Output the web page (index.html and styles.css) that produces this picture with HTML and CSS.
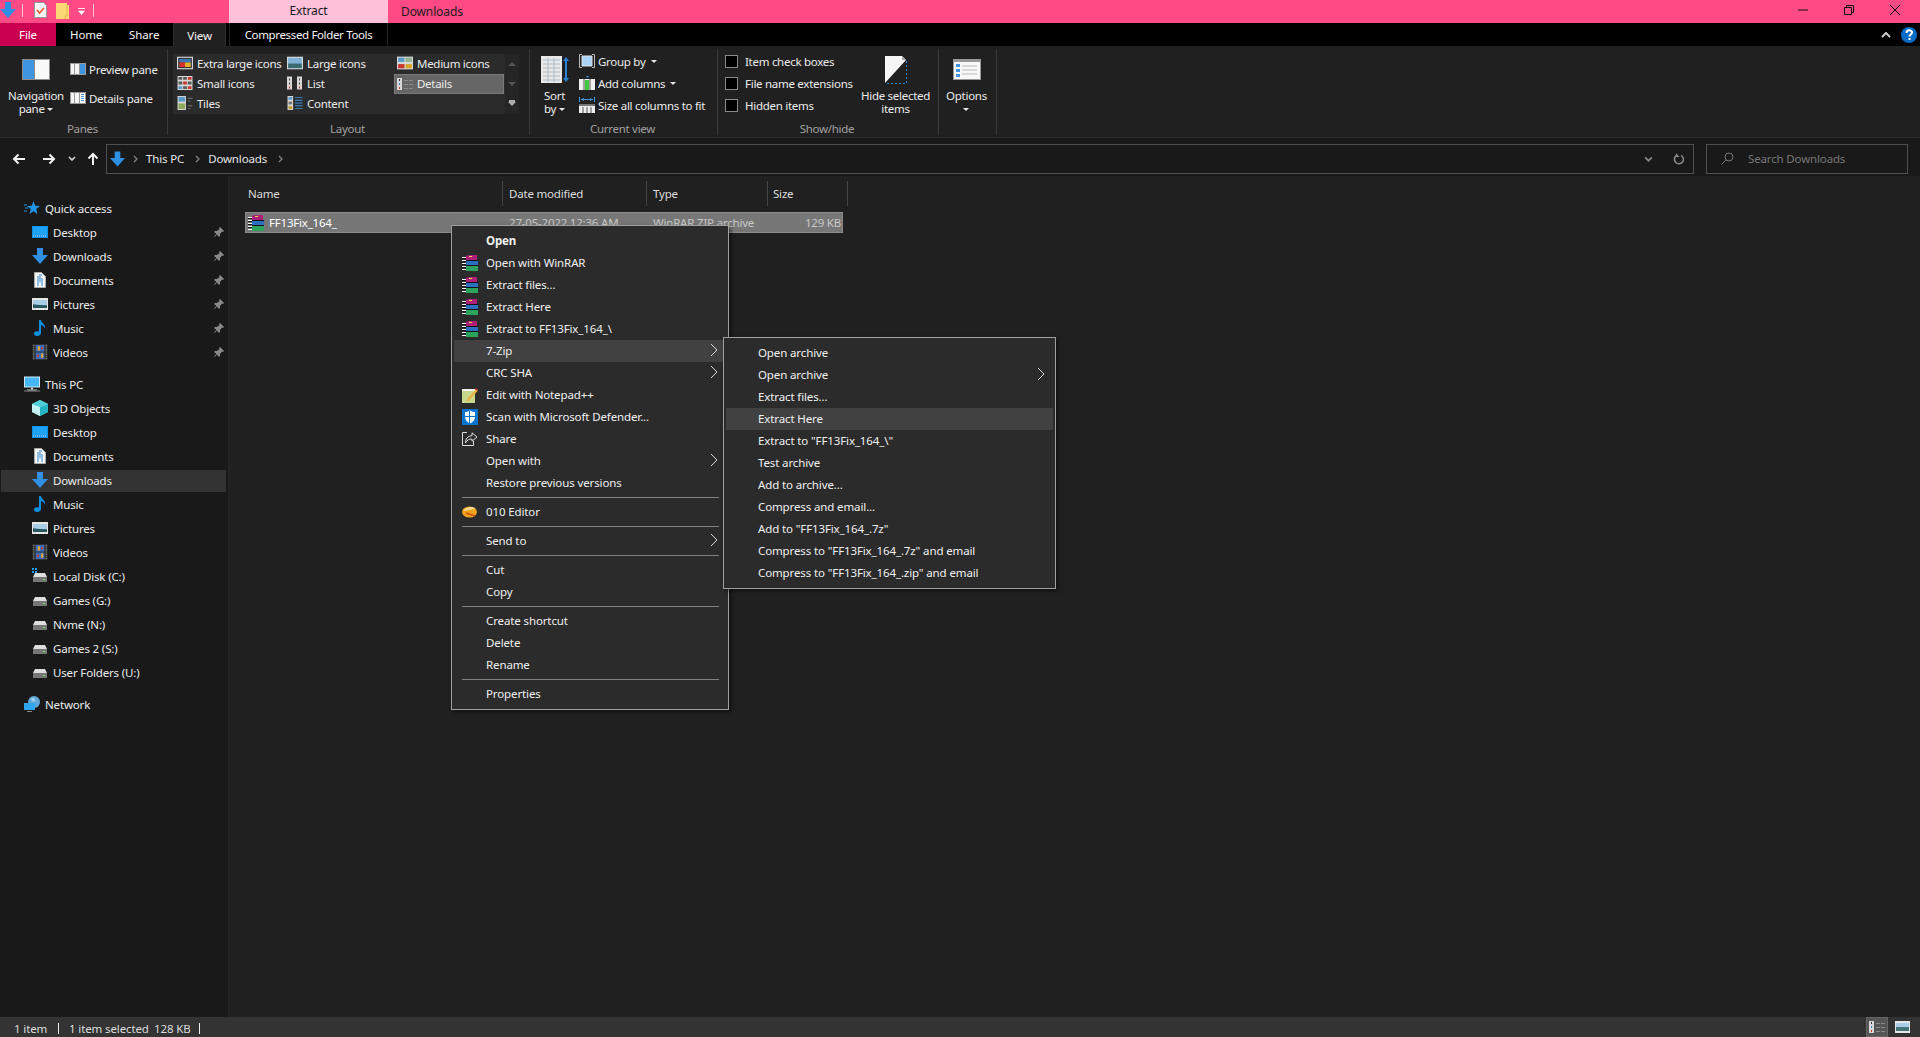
FILE: index.html
```html
<!DOCTYPE html>
<html lang="en">
<head>
<meta charset="utf-8">
<title>Downloads</title>
<link rel="stylesheet" href="styles.css">
</head>
<body>
<svg class="defs" xmlns="http://www.w3.org/2000/svg">
  <symbol id="dl" viewBox="0 0 16 16"><path d="M5 0h6v7h5l-8 9-8-9h5z" fill="#2f8fe3"/></symbol>
  <symbol id="qnote" viewBox="0 0 13 16"><path d="M.5.5h9l3 3v12H.5z" fill="#f5f5f5" stroke="#999"/><path d="M3 8l2.500 3 4.500-5" fill="none" stroke="#e8562a" stroke-width="1.500"/></symbol>
  <symbol id="qfolder" viewBox="0 0 13 16"><path d="M0 0h11v2h2v14H0z" fill="#fbd775"/><path d="M11 2v11H9v3" fill="none" stroke="#e2b64b"/></symbol>
  <symbol id="qdrop" viewBox="0 0 8 8"><path d="M0 .5h8" stroke="#fff"/><path d="M0 3h8L4 8z" fill="#fff"/></symbol>
  <symbol id="navpane" viewBox="0 0 28 21"><path d="M0 0h28v21H0z" fill="#8c8c8c"/><path d="M1 1h11v19H1z" fill="#3f95e0"/><path d="M13 1h14v19H13z" fill="#f8f8f8"/></symbol>
  <symbol id="prevpane" viewBox="0 0 16 12"><path d="M0 0h16v12H0z" fill="#999"/><path d="M1 1h3v10H1zM5 1h4v10H5z" fill="#f4f4f4"/><path d="M10 1h5v10h-5z" fill="#3f95e0"/></symbol>
  <symbol id="detpane" viewBox="0 0 16 12"><path d="M0 0h16v12H0z" fill="#999"/><path d="M1 1h3v10H1zM5 1h4v10H5z" fill="#f4f4f4"/><path d="M10 1h5v10h-5z" fill="#fff"/><path d="M11 2h3v1h-3zM11 4h3v1h-3zM11 6h3v1h-3zM11 8h3v1h-3z" fill="#3f95e0"/></symbol>
  <symbol id="xl" viewBox="0 0 14 11"><path d="M0 0h14v11H0z" fill="#d8d8d8"/><path d="M1 1h12v9H1z" fill="#333"/><path d="M2 2h10v3H2z" fill="#3a78b8"/><path d="M2 5h5v4H2z" fill="#d8352a"/><path d="M7 5h5v4H7z" fill="#e2b32c"/></symbol>
  <symbol id="lg" viewBox="0 0 14 11"><path d="M0 0h14v11H0z" fill="#d8d8d8"/><path d="M1 1h12v9H1z" fill="#7fb2d6"/><path d="M1 6h12v4H1z" fill="#3a6a70"/></symbol>
  <symbol id="med" viewBox="0 0 15 12"><path d="M0 0h15v12H0z" fill="#d8d8d8"/><path d="M1 1h6v4H1z" fill="#5a9acb"/><path d="M8 1h6v4H8z" fill="#8fb48a"/><path d="M1 7h6v4H1z" fill="#c8382c"/><path d="M8 7h6v4H8z" fill="#d8a52c"/></symbol>
  <symbol id="sm" viewBox="0 0 16 15"><path d="M0 0h16v15H0z" fill="#d8d8d8"/><path d="M1 1h4v3H1zM6 1h4v3H6zM1 6h4v3H1zM11 6h4v3h-4zM6 11h4v3H6z" fill="#5a5a5a"/><path d="M11 1h4v3h-4zM6 6h4v3H6zM11 11h4v3h-4z" fill="#c8382c"/><path d="M1 11h4v3H1z" fill="#5a9acb"/></symbol>
  <symbol id="lst" viewBox="0 0 16 13"><path d="M0 0h5v13H0zM10 0h5v13h-5z" fill="#d8d8d8"/><path d="M2 2h1v2H2zM2 6h1v2H2zM12 2h1v2h-1zM12 6h1v2h-1z" fill="#444"/><path d="M2 10h1v2H2zM12 10h1v2h-1z" fill="#c8382c"/></symbol>
  <symbol id="tile" viewBox="0 0 16 15"><path d="M0 0h9v15H0z" fill="#d8d8d8"/><path d="M1 1h7v5H1z" fill="#5a9acb"/><path d="M1 8h7v6H1z" fill="#8fa85a"/><path d="M11 2h5v1h-5zM11 5h3v1h-3zM11 10h5v1h-5zM11 13h3v1h-3z" fill="#777"/></symbol>
  <symbol id="cont" viewBox="0 0 16 15"><path d="M0 0h6v15H0z" fill="#d8d8d8"/><path d="M1 1h4v3H1z" fill="#5a9acb"/><path d="M1 6h4v3H1z" fill="#777"/><path d="M1 11h4v3H1z" fill="#c89a2c"/><path d="M8 1h8v1H8zM8 4h8v1H8zM8 7h8v1H8zM8 10h8v1H8zM8 13h8v1H8z" fill="#3f95e0"/></symbol>
  <symbol id="detv" viewBox="0 0 16 12"><path d="M0 0h5v12H0z" fill="#d8d8d8"/><path d="M2 1h1v2H2z" fill="#333"/><path d="M2 5h1v2H2z" fill="#3f7fc8"/><path d="M2 9h1v2H2z" fill="#c8382c"/><path d="M7 2h4v1H7zM12 2h4v1h-4zM7 6h4v1H7zM12 6h4v1h-4zM7 10h4v1H7zM12 10h4v1h-4z" fill="#8a8a8a"/></symbol>
  <symbol id="sort" viewBox="0 0 28 27"><path d="M0 0h21v27H0z" fill="#e8e8e8"/><path d="M2 4h17M2 8h17M2 12h17M2 16h17M2 20h17M2 24h17M7 2v24M13 2v24" stroke="#aebcc8"/><path d="M25 3v21" stroke="#2b83d6" stroke-width="2"/><path d="M22 5l3-4 3 4zM22 22l3 4 3-4z" fill="#2b83d6"/></symbol>
  <symbol id="grp" viewBox="0 0 16 14"><path d="M3 .5H.5v13H3M13 .5h2.500v13H13" fill="none" stroke="#bbb"/><path d="M3 2h10v10H3z" fill="#a8d4f8" stroke="#e0e0e0"/></symbol>
  <symbol id="addc" viewBox="0 0 16 14"><path d="M7 0h3L8.500 2z" fill="#3f95e0"/><path d="M0 3h16v11H0z" fill="#f0f0f0"/><path d="M6 4h4v10H6z" fill="#3ecb3e"/><path d="M5 3v11M11 3v11" stroke="#555"/></symbol>
  <symbol id="sizec" viewBox="0 0 16 16"><path d="M.5 0v5M15.500 0v5M2 2.500h12" stroke="#3f95e0"/><path d="M5 1v3L2 2.500zM11 1v3l3-1.500z" fill="#3f95e0"/><path d="M0 7h16v9H0z" fill="#eee"/><path d="M0 7h16v2H0z" fill="#777"/><path d="M4 10v6M8 10v6M12 10v6" stroke="#555"/></symbol>
  <symbol id="hide" viewBox="0 0 22 28"><path d="M0 0h17l4 4L0 27z" fill="#f6f6f6"/><path d="M17 0v4h4z" fill="#aaa"/><path d="M21.500 5v22.500H1" fill="none" stroke="#2b83d6" stroke-dasharray="2 2"/></symbol>
  <symbol id="opts" viewBox="0 0 28 21"><path d="M0 0h28v21H0z" fill="#999"/><path d="M1 3h26v17H1z" fill="#f8f8f8"/><path d="M9 7h15M9 11h15M9 15h15" stroke="#bbb"/><path d="M3 5h4v3H3zM3 10h4v3H3zM3 15h4v3H3z" fill="#3f95e0"/></symbol>
  <symbol id="desk" viewBox="0 0 16 12"><path d="M0 0h16v12H0z" fill="#0a92ec"/><path d="M1 1h14v8H1z" fill="#1fa2f5"/><path d="M1 10h14" stroke="#d8ecfa" stroke-dasharray="1 1"/></symbol>
  <symbol id="doc" viewBox="0 0 12 16"><path d="M.5.500h7l4 4v11H.5z" fill="#f4f4f4" stroke="#aaa"/><path d="M3 5h4M5 3h3M3 7h6M3 9h6M3 11h2M7 11h2M3 13h2M7 13h2" stroke="#2b83d6"/></symbol>
  <symbol id="pic" viewBox="0 0 16 12"><path d="M0 0h16v12H0z" fill="#e6e6e6"/><path d="M1 2h14v8H1z" fill="#a9cde6"/><path d="M1 6l6 1 8 0v3H1z" fill="#41757a"/><path d="M1 7h8l6 1v2H1z" fill="#2a5660"/></symbol>
  <symbol id="mus" viewBox="0 0 12 16"><path d="M5 0h2c0 3 5 4 4 9-.5-2-2-3.500-4-4v8c0 2-2 3-4 3s-3-1-3-2.500S2 11 5 11.500z" fill="#0f8fe0"/></symbol>
  <symbol id="vid" viewBox="0 0 14 15"><path d="M0 0h14v15H0z" fill="#333"/><path d="M3 1h8v6H3z" fill="#3f6fc0"/><path d="M3 8h8v6H3z" fill="#3f6fc0"/><path d="M5 2h2v4H5zM8 9h2v4H8z" fill="#e0a82c"/><path d="M8 3h2v2H8zM4 10h2v2H4z" fill="#c8382c"/><path d="M1 1v13M13 1v13" stroke="#888" stroke-dasharray="1 1"/></symbol>
  <symbol id="star" viewBox="0 0 16 14"><path d="M9.500 0l1.700 4.700L16 5l-3.800 3 1.300 5-4-2.800-4 2.800 1.300-5L3 5l4.800-.3z" fill="#1f95ea"/><path d="M0 4h3M1 7h3M0 10h3" stroke="#1f95ea"/></symbol>
  <symbol id="pc" viewBox="0 0 16 15"><path d="M0 0h16v11H0z" fill="#cfe8f8"/><path d="M1 1h14v9H1z" fill="#47b7f2"/><path d="M7 11h2v2H7z" fill="#ccc"/><path d="M3 13h10v1H3z" fill="#ccc"/><path d="M0 14h16v1H0z" fill="#888"/></symbol>
  <symbol id="cube" viewBox="0 0 16 16"><path d="M8 0l8 4v8l-8 4-8-4V4z" fill="#7ee0e0"/><path d="M8 7l8-3v8l-8 4z" fill="#25b2c2"/><path d="M8 7L0 4v8l8 4z" fill="#c4f2f2"/><path d="M8 0l8 4-8 3-8-3z" fill="#4fcfd8"/></symbol>
  <symbol id="disk" viewBox="0 0 16 16"><path d="M3 5h10l2 4v5H1V9z" fill="#ddd"/><path d="M1 9h14v5H1z" fill="#777"/><path d="M11 11h2v1h-2z" fill="#6fe06f"/></symbol>
  <symbol id="cdisk" viewBox="0 0 16 16"><path d="M0 0h2v2H0zM3 0h2v2H3zM0 3h2v2H0zM3 3h2v2H3z" fill="#1fa2f5"/><path d="M3 5h10l2 4v5H1V9z" fill="#ddd"/><path d="M1 9h14v5H1z" fill="#777"/><path d="M11 11h2v1h-2z" fill="#6fe06f"/></symbol>
  <symbol id="net" viewBox="0 0 16 16"><circle cx="10" cy="6" r="6" fill="#5ea8d8"/><path d="M7 2c3-1 5 1 4 3S7 6 7 2z" fill="#9ad0ec"/><path d="M0 7h11v7H0z" fill="#2ea6ee"/><path d="M3 15h5v1H3z" fill="#888"/></symbol>
  <symbol id="pin" viewBox="0 0 10 10"><path d="M6 0l4 4-1 1-1-.5L6 7v2L5 10 3 7.500.5 10 0 9.500 2.500 7 0 5l1-1h2l2.500-2L5 1z" fill="#8a8a8a"/></symbol>
  <symbol id="rar" viewBox="0 0 16 16"><path d="M4 1l3-1h8v5H4z" fill="#b01e78"/><path d="M4 6h12v4H4z" fill="#2c6fc0"/><path d="M4 11h12v5H4z" fill="#2ca25a"/><path d="M0 2h4v1H0zM0 5h4v1H0zM0 8h4v1H0zM0 11h4v1H0zM0 14h4v1H0z" fill="#fff"/><path d="M0 3.500h4M0 6.500h4M0 9.500h4M0 12.500h4M4 5.500h12M4 10.500h12" stroke="#111"/><path d="M7 1h3v1H7z" fill="#e8d44a"/></symbol>
  <symbol id="npp" viewBox="0 0 16 16"><path d="M0 2h13v14H0z" fill="#c6d98c"/><path d="M0 2h13v2H0z" fill="#f4f4f4"/><path d="M5 12L14 2l2 1.500-9 10-3 1z" fill="#e8b44a"/><path d="M14 1l2 2-1 1-2-2z" fill="#d03a2a"/></symbol>
  <symbol id="def" viewBox="0 0 16 16"><path d="M0 0h16v16H0z" fill="#0a74d0"/><path d="M8 1.500c2 1.200 3.500 1.500 5 1.500v5c0 3-2 5-5 6.500C5 13 3 11 3 8V3c1.500 0 3-.3 5-1.500z" fill="#fff"/><path d="M7.500 2v13M3 7.500h10" stroke="#0a74d0"/></symbol>
  <symbol id="share" viewBox="0 0 16 14"><path d="M5 .5H.5v13h11V9" fill="none" stroke="#ddd"/><path d="M10 .8l5 4.200-5 4.200V7C7 7 5 8 3.500 11c0-4 2-7 6.500-7.300z" fill="none" stroke="#ddd"/></symbol>
  <symbol id="leaf" viewBox="0 0 16 12"><ellipse cx="7.500" cy="6" rx="7.500" ry="5.500" fill="#f2a31e"/><path d="M1 5c3-4 8-5 12-3 1 1-5 2-12 3z" fill="#f8d88a"/><path d="M4 7l9 3" stroke="#c8501e" stroke-width="1.500"/></symbol>
  <symbol id="help" viewBox="0 0 16 16"><circle cx="8" cy="8" r="8" fill="#0a6cc4"/><path d="M5.500 6c0-3.500 5.500-3.500 5.500-.5 0 2-2.500 2-2.500 4" fill="none" stroke="#fff" stroke-width="2"/><path d="M7.500 11h2v2h-2z" fill="#fff"/></symbol>
  <symbol id="arrow" viewBox="0 0 8 14"><path d="M1 1l6 6-6 6" fill="none" stroke="#d8d8d8"/></symbol>
  <symbol id="crumb" viewBox="0 0 5 8"><path d="M1 1l3 3-3 3" fill="none" stroke="#888" stroke-width="1.200"/></symbol>
  <symbol id="navl" viewBox="0 0 14 12"><path d="M13 6H2M6.500 1.500L2 6l4.500 4.500" fill="none" stroke="#f2f2f2" stroke-width="2"/></symbol>
  <symbol id="navr" viewBox="0 0 14 12"><path d="M1 6h11M7.500 1.500L12 6l-4.500 4.500" fill="none" stroke="#f2f2f2" stroke-width="2"/></symbol>
  <symbol id="navu" viewBox="0 0 12 14"><path d="M6 13V2M1.500 6.500L6 2l4.500 4.500" fill="none" stroke="#f2f2f2" stroke-width="2"/></symbol>
  <symbol id="chev" viewBox="0 0 8 5"><path d="M1 1l3 3 3-3" fill="none" stroke="currentColor" stroke-width="1.500"/></symbol>
  <symbol id="refresh" viewBox="0 0 12 12"><path d="M8 2.300A4.500 4.500 0 1 1 3.500 2.500" fill="none" stroke="#8a8a8a" stroke-width="1.500"/><path d="M3 0v4h3.500z" fill="#8a8a8a"/></symbol>
  <symbol id="search" viewBox="0 0 13 13"><circle cx="8" cy="5" r="4" fill="none" stroke="#777"/><path d="M5 8l-4.500 4.500" stroke="#777"/></symbol>
  <symbol id="tiles" viewBox="0 0 15 12"><path d="M0 0h15v12H0z" fill="#e6e6e6"/><path d="M1 2h13v8H1z" fill="#a9cde6"/><path d="M1 6h13v4H1z" fill="#41757a"/></symbol>
</svg>

<div class="window">
  <header class="titlebar">
    <svg class="ic qat-dl"><use href="#dl"/></svg>
    <span class="qat-sep"></span>
    <svg class="ic qat-note"><use href="#qnote"/></svg>
    <svg class="ic qat-folder"><use href="#qfolder"/></svg>
    <svg class="ic qat-drop"><use href="#qdrop"/></svg>
    <span class="qat-sep qat-sep-end"></span>
    <span class="ctx-title">Extract</span>
    <span class="win-title">Downloads</span>
    <div class="win-ctrls">
      <span class="wc"><svg class="wc-ic" viewBox="0 0 10 10"><path d="M0 5h10" stroke="#111"/></svg></span>
      <span class="wc"><svg class="wc-ic" viewBox="0 0 10 10"><path d="M.5 2.500h7v7h-7zM2.500 2.500v-2h7v7h-2" fill="none" stroke="#111"/></svg></span>
      <span class="wc"><svg class="wc-ic" viewBox="0 0 10 10"><path d="M0 0l10 10M10 0L0 10" stroke="#111" fill="none"/></svg></span>
    </div>
  </header>

  <nav class="tabs">
    <span class="tab tab-file">File</span>
    <span class="tab tab-home">Home</span>
    <span class="tab tab-share">Share</span>
    <span class="tab tab-view">View</span>
    <span class="tab tab-tools">Compressed Folder Tools</span>
    <div class="tabs-right">
      <svg class="collapse" viewBox="0 0 10 6"><path d="M1 5l4-4 4 4" fill="none" stroke="#ccc" stroke-width="2"/></svg>
      <svg class="ic help"><use href="#help"/></svg>
    </div>
  </nav>

  <section class="ribbon">
    <div class="group g-panes">
      <div class="group-body">
        <div class="large large-nav">
          <svg class="ic lg-icon"><use href="#navpane"/></svg>
          <span class="large-label">Navigation<br>pane <i class="caret"></i></span>
        </div>
        <div class="pane-col">
          <div class="pane-row"><svg class="ic i16x12"><use href="#prevpane"/></svg>Preview pane</div>
          <div class="pane-row"><svg class="ic i16x12"><use href="#detpane"/></svg>Details pane</div>
        </div>
      </div>
      <div class="group-label">Panes</div>
    </div>

    <div class="group g-layout">
      <div class="group-body">
        <div class="gallery">
          <div class="gallery-grid">
            <div class="gi"><svg class="ic gi-ic"><use href="#xl"/></svg>Extra large icons</div>
            <div class="gi"><svg class="ic gi-ic"><use href="#lg"/></svg>Large icons</div>
            <div class="gi"><svg class="ic gi-ic"><use href="#med"/></svg>Medium icons</div>
            <div class="gi"><svg class="ic gi-ic"><use href="#sm"/></svg>Small icons</div>
            <div class="gi"><svg class="ic gi-ic"><use href="#lst"/></svg>List</div>
            <div class="gi gi-sel"><svg class="ic gi-ic"><use href="#detv"/></svg>Details</div>
            <div class="gi"><svg class="ic gi-ic"><use href="#tile"/></svg>Tiles</div>
            <div class="gi"><svg class="ic gi-ic"><use href="#cont"/></svg>Content</div>
          </div>
          <div class="gallery-scroll">
            <i class="gs gs-up"></i>
            <i class="gs gs-down"></i>
            <i class="gs gs-more"></i>
          </div>
        </div>
      </div>
      <div class="group-label">Layout</div>
    </div>

    <div class="group g-current">
      <div class="group-body">
        <div class="large large-sort">
          <svg class="ic sort-icon"><use href="#sort"/></svg>
          <span class="large-label">Sort<br>by <i class="caret"></i></span>
        </div>
        <div class="small-col">
          <div class="small-row"><svg class="ic i16"><use href="#grp"/></svg>Group by <i class="caret"></i></div>
          <div class="small-row"><svg class="ic i16"><use href="#addc"/></svg>Add columns <i class="caret"></i></div>
          <div class="small-row"><svg class="ic i16"><use href="#sizec"/></svg>Size all columns to fit</div>
        </div>
      </div>
      <div class="group-label">Current view</div>
    </div>

    <div class="group g-show">
      <div class="group-body">
        <div class="small-col check-col">
          <div class="small-row"><i class="check"></i>Item check boxes</div>
          <div class="small-row"><i class="check"></i>File name extensions</div>
          <div class="small-row"><i class="check"></i>Hidden items</div>
        </div>
        <div class="large large-hide">
          <svg class="ic hide-icon"><use href="#hide"/></svg>
          <span class="large-label">Hide selected<br>items</span>
        </div>
      </div>
      <div class="group-label">Show/hide</div>
    </div>

    <div class="group g-options">
      <div class="group-body">
        <div class="large large-opts">
          <svg class="ic lg-icon"><use href="#opts"/></svg>
          <span class="large-label">Options<br><i class="caret"></i></span>
        </div>
      </div>
    </div>
  </section>

  <section class="addressbar">
    <svg class="ic nav-back"><use href="#navl"/></svg>
    <svg class="ic nav-fwd"><use href="#navr"/></svg>
    <svg class="ic nav-recent"><use href="#chev"/></svg>
    <svg class="ic nav-up"><use href="#navu"/></svg>
    <div class="addr-box">
      <svg class="ic addr-dl"><use href="#dl"/></svg>
      <svg class="ic crumb"><use href="#crumb"/></svg>
      <span class="crumb-text">This PC</span>
      <svg class="ic crumb"><use href="#crumb"/></svg>
      <span class="crumb-text">Downloads</span>
      <svg class="ic crumb"><use href="#crumb"/></svg>
      <svg class="ic addr-chev"><use href="#chev"/></svg>
      <svg class="ic addr-refresh"><use href="#refresh"/></svg>
    </div>
    <div class="search-box">
      <svg class="ic search-ic"><use href="#search"/></svg>
      <span>Search Downloads</span>
    </div>
  </section>

  <div class="content">
    <aside class="sidebar">
      <div class="side-head"><svg class="ic i16"><use href="#star"/></svg>Quick access</div>
      <div class="side-item"><svg class="ic i16"><use href="#desk"/></svg>Desktop<svg class="ic pin"><use href="#pin"/></svg></div>
      <div class="side-item"><svg class="ic i16"><use href="#dl"/></svg>Downloads<svg class="ic pin"><use href="#pin"/></svg></div>
      <div class="side-item"><svg class="ic i16"><use href="#doc"/></svg>Documents<svg class="ic pin"><use href="#pin"/></svg></div>
      <div class="side-item"><svg class="ic i16"><use href="#pic"/></svg>Pictures<svg class="ic pin"><use href="#pin"/></svg></div>
      <div class="side-item"><svg class="ic i16"><use href="#mus"/></svg>Music<svg class="ic pin"><use href="#pin"/></svg></div>
      <div class="side-item"><svg class="ic i16"><use href="#vid"/></svg>Videos<svg class="ic pin"><use href="#pin"/></svg></div>
      <div class="side-head side-gap"><svg class="ic i16"><use href="#pc"/></svg>This PC</div>
      <div class="side-item"><svg class="ic i16"><use href="#cube"/></svg>3D Objects</div>
      <div class="side-item"><svg class="ic i16"><use href="#desk"/></svg>Desktop</div>
      <div class="side-item"><svg class="ic i16"><use href="#doc"/></svg>Documents</div>
      <div class="side-item side-sel"><svg class="ic i16"><use href="#dl"/></svg>Downloads</div>
      <div class="side-item"><svg class="ic i16"><use href="#mus"/></svg>Music</div>
      <div class="side-item"><svg class="ic i16"><use href="#pic"/></svg>Pictures</div>
      <div class="side-item"><svg class="ic i16"><use href="#vid"/></svg>Videos</div>
      <div class="side-item"><svg class="ic i16"><use href="#cdisk"/></svg>Local Disk (C:)</div>
      <div class="side-item"><svg class="ic i16"><use href="#disk"/></svg>Games (G:)</div>
      <div class="side-item"><svg class="ic i16"><use href="#disk"/></svg>Nvme (N:)</div>
      <div class="side-item"><svg class="ic i16"><use href="#disk"/></svg>Games 2 (S:)</div>
      <div class="side-item"><svg class="ic i16"><use href="#disk"/></svg>User Folders (U:)</div>
      <div class="side-head side-gap"><svg class="ic i16"><use href="#net"/></svg>Network</div>
    </aside>

    <main class="files">
      <div class="col-head">
        <span class="ch ch-name">Name</span>
        <span class="ch ch-date">Date modified</span>
        <span class="ch ch-type">Type</span>
        <span class="ch ch-size">Size</span>
      </div>
      <div class="file-row">
        <span class="fc fc-name"><svg class="ic i16 file-ic"><use href="#rar"/></svg>FF13Fix_164_</span>
        <span class="fc fc-date">27-05-2022 12:36 AM</span>
        <span class="fc fc-type">WinRAR ZIP archive</span>
        <span class="fc fc-size">129 KB</span>
      </div>
    </main>
  </div>

  <footer class="statusbar">
    <span class="st-count">1 item</span>
    <span class="st-bar"></span>
    <span class="st-sel">1 item selected</span>
    <span class="st-size">128 KB</span>
    <span class="st-bar"></span>
    <div class="st-views">
      <span class="st-view st-view-on"><svg class="ic st-ic-a"><use href="#detv"/></svg></span>
      <span class="st-view"><svg class="ic st-ic-b"><use href="#tiles"/></svg></span>
    </div>
  </footer>

  <div class="menu menu-main">
    <div class="mi mi-bold">Open</div>
    <div class="mi"><svg class="ic mi-ic"><use href="#rar"/></svg>Open with WinRAR</div>
    <div class="mi"><svg class="ic mi-ic"><use href="#rar"/></svg>Extract files...</div>
    <div class="mi"><svg class="ic mi-ic"><use href="#rar"/></svg>Extract Here</div>
    <div class="mi"><svg class="ic mi-ic"><use href="#rar"/></svg>Extract to FF13Fix_164_\</div>
    <div class="mi mi-hover">7-Zip<svg class="ic mi-arrow"><use href="#arrow"/></svg></div>
    <div class="mi">CRC SHA<svg class="ic mi-arrow"><use href="#arrow"/></svg></div>
    <div class="mi"><svg class="ic mi-ic"><use href="#npp"/></svg>Edit with Notepad++</div>
    <div class="mi"><svg class="ic mi-ic"><use href="#def"/></svg>Scan with Microsoft Defender...</div>
    <div class="mi"><svg class="ic mi-ic"><use href="#share"/></svg>Share</div>
    <div class="mi">Open with<svg class="ic mi-arrow"><use href="#arrow"/></svg></div>
    <div class="mi">Restore previous versions</div>
    <div class="msep"></div>
    <div class="mi"><svg class="ic mi-ic"><use href="#leaf"/></svg>010 Editor</div>
    <div class="msep"></div>
    <div class="mi">Send to<svg class="ic mi-arrow"><use href="#arrow"/></svg></div>
    <div class="msep"></div>
    <div class="mi">Cut</div>
    <div class="mi">Copy</div>
    <div class="msep"></div>
    <div class="mi">Create shortcut</div>
    <div class="mi">Delete</div>
    <div class="mi">Rename</div>
    <div class="msep"></div>
    <div class="mi">Properties</div>
  </div>

  <div class="menu menu-sub">
    <div class="mi">Open archive</div>
    <div class="mi">Open archive<svg class="ic mi-arrow"><use href="#arrow"/></svg></div>
    <div class="mi">Extract files...</div>
    <div class="mi mi-hover">Extract Here</div>
    <div class="mi">Extract to "FF13Fix_164_\"</div>
    <div class="mi">Test archive</div>
    <div class="mi">Add to archive...</div>
    <div class="mi">Compress and email...</div>
    <div class="mi">Add to "FF13Fix_164_.7z"</div>
    <div class="mi">Compress to "FF13Fix_164_.7z" and email</div>
    <div class="mi">Compress to "FF13Fix_164_.zip" and email</div>
  </div>
</div>
</body>
</html>
```

FILE: styles.css
```css
* { box-sizing: border-box; }
html, body { margin: 0; padding: 0; }
body { background: #202020; font-family: "Noto Sans", "Open Sans", sans-serif; font-size: 11.5px; letter-spacing: -0.12px; color: #ececec; }
.defs { display: none; }
.ic { display: block; flex: none; }
.window { position: relative; width: 1920px; height: 1037px; overflow: hidden; display: flex; flex-direction: column; }

/* title bar */
.titlebar { height: 23px; background: #ff4b85; display: flex; align-items: center; flex: none; color: #1a1a1a; font-size: 12px; }
.qat-dl { width: 16px; height: 16px; margin-left: 0; margin-top: -3px; }
.qat-sep { width: 1px; height: 13px; background: #ffc0d9; margin-left: 6px; margin-top: -2px; }
.qat-note { width: 13px; height: 16px; margin-left: 11px; margin-top: -3px; }
.qat-folder { width: 13px; height: 16px; margin-left: 9px; margin-top: -1px; }
.qat-drop { width: 7px; height: 7px; margin-left: 9px; }
.qat-sep-end { margin-left: 8px; margin-right: 135px; }
.ctx-title { width: 159px; height: 23px; background: #ffc0d9; text-align: center; line-height: 21px; flex: none; margin-left: 0; }
.win-title { margin-left: 13px; line-height: 23px; }
.win-ctrls { margin-left: auto; margin-right: 2px; display: flex; align-self: flex-start; }
.wc { width: 46px; height: 19px; display: flex; align-items: center; justify-content: center; }
.wc-ic { width: 10px; height: 10px; display: block; }

/* tabs */
.tabs { height: 23px; background: #000; display: flex; align-items: stretch; flex: none; position: relative; }
.tab { line-height: 23px; color: #f4f4f4; white-space: nowrap; }
.tab-file { width: 56px; background: #c8004f; text-align: center; color: #fff; }
.tab-home { margin-left: 14px; width: 59px; }
.tab-share { width: 44px; }
.tab-view { width: 53px; background: #202020; text-align: center; border: 1px solid #2e2e2e; border-bottom: 0; }
.tab-tools { margin-left: 3px; width: 159px; text-align: center; letter-spacing: -0.35px; border-left: 1px solid #232323; border-right: 1px solid #232323; }
.tabs-right { margin-left: auto; display: flex; align-items: center; margin-right: 3px; }
.collapse { width: 10px; height: 6px; display: block; margin-right: 10px; }
.help { width: 16px; height: 16px; }

/* ribbon */
.ribbon { height: 92px; background: #202020; display: flex; padding-top: 3px; flex: none; border-bottom: 1px solid #2b2b2b; letter-spacing: -0.28px; }
.group { height: 86px; border-right: 1px solid #3a3a3a; display: flex; flex-direction: column; flex: none; }
.group-body { height: 74px; display: flex; }
.group-label { height: 12px; line-height: 12px; text-align: center; color: #a0a0a0; font-size: 11.5px; padding-right: 2px; }
.g-panes { width: 168px; }
.g-layout { width: 362px; }
.g-current { width: 188px; }
.g-show { width: 221px; }
.g-options { width: 58px; }
.large { display: flex; flex-direction: column; align-items: center; flex: none; padding-top: 10px; }
.large-label { display: block; text-align: center; line-height: 13px; margin-top: 9px; white-space: nowrap; }
.large-nav { width: 72px; }
.lg-icon { width: 28px; height: 21px; }
.caret { display: inline-block; width: 0; height: 0; border: 3px solid transparent; border-top: 3px solid #e6e6e6; border-bottom: 0; vertical-align: 2px; }
.pane-col { margin-left: -2px; display: flex; flex-direction: column; padding-top: 14px; gap: 17px; }
.pane-row { display: flex; align-items: center; gap: 3px; height: 12px; white-space: nowrap; }
.i16x12 { width: 16px; height: 12px; }
.gallery { margin: 5px 0 0 5px; width: 346px; height: 60px; background: #2b2b2b; display: flex; }
.gallery-grid { width: 331px; margin-left: 1px; display: grid; grid-template-columns: repeat(3, 110px); grid-auto-rows: 20px; }
.gi { display: flex; align-items: center; white-space: nowrap; padding: 0 0 2px 3px; }
.gi-ic { width: 16px; height: 14px; margin-right: 4px; }
.gi-sel { background: #666; border: 1px solid #7a7a7a; padding: 0 0 1px 2px; }
.gallery-scroll { width: 14px; background: #252525; display: flex; flex-direction: column; }
.gs { height: 20px; display: flex; }
.gs::after { content: ""; margin: auto; border: 4px solid transparent; }
.gs-up::after { border-bottom: 4px solid #555; border-top: 0; }
.gs-down::after { border-top: 4px solid #555; border-bottom: 0; }
.gs-more::after { border-top: 4px solid #aaa; border-bottom: 0; box-shadow: 0 -3px 0 -1px #aaa; }
.large-sort { width: 49px; padding-top: 7px; }
.sort-icon { width: 28px; height: 27px; }
.large-sort .large-label { margin-top: 6px; }
.small-col { display: flex; flex-direction: column; padding-top: 2px; }
.small-row { height: 22px; display: flex; align-items: center; gap: 3px; white-space: nowrap; padding-bottom: 2px; }
.small-row .caret { margin: 1px 0 0 2px; }
.i16 { width: 16px; height: 16px; }
.check-col { width: 135px; margin-left: 7px; flex: none; }
.check { width: 13px; height: 13px; background: #000; border: 1px solid #8a8a8a; margin-right: 4px; flex: none; }
.large-hide { width: 71px; padding-top: 7px; }
.hide-icon { width: 22px; height: 28px; }
.large-hide .large-label { margin-top: 5px; }
.large-opts { width: 55px; }

/* address bar */
.addressbar { height: 38px; background: #191919; display: flex; align-items: center; flex: none; padding-top: 3px; letter-spacing: -0.15px; }
.nav-back { width: 14px; height: 12px; margin-left: 12px; }
.nav-fwd { width: 14px; height: 12px; margin-left: 16px; }
.nav-recent { width: 8px; height: 5px; margin-left: 12px; color: #ddd; }
.nav-up { width: 12px; height: 14px; margin-left: 11px; }
.addr-box { width: 1588px; height: 30px; margin-left: 7px; border: 1px solid #4f4f4f; display: flex; align-items: center; }
.addr-dl { width: 15px; height: 16px; margin-left: 3px; }
.crumb { width: 5px; height: 8px; margin: 0 8px; }
.addr-box .addr-dl + .crumb { margin-left: 8px; }
.crumb-text { white-space: nowrap; color: #e6e6e6; margin-right: 3px; }
.addr-chev { width: 9px; height: 6px; margin-left: auto; color: #888; }
.addr-refresh { width: 12px; height: 12px; margin: 0 8px 0 20px; }
.search-box { width: 202px; height: 30px; margin-left: 12px; border: 1px solid #4f4f4f; display: flex; align-items: center; color: #777; }
.search-ic { width: 13px; height: 13px; margin: 0 14px 0 14px; }

/* content */
.content { flex: 1; display: flex; min-height: 0; }
.sidebar { width: 230px; background: #191919; border-right: 2px solid #232323; padding-top: 21px; flex: none; letter-spacing: -0.16px; }
.side-head, .side-item { height: 24px; display: flex; align-items: center; white-space: nowrap; color: #ececec; padding-bottom: 2px; }
.side-head { padding-left: 24px; gap: 5px; }
.side-item { padding-left: 32px; gap: 5px; }
.side-gap { margin-top: 8px; }
.side-sel { background: #333; height: 22px; margin: 1px 2px 1px 1px; padding-left: 31px; }
.pin { width: 10px; height: 10px; margin-left: auto; margin-right: 4px; }
.files { flex: 1; background: #202020; padding-top: 5px; letter-spacing: -0.2px; }
.col-head { height: 25px; display: flex; padding-left: 10px; }
.ch { display: flex; align-items: center; height: 25px; border-right: 1px solid #454545; padding-left: 8px; color: #dcdcdc; }
.ch-name { width: 263px; }
.ch-date { width: 144px; padding-left: 6px; }
.ch-type { width: 121px; padding-left: 6px; }
.ch-size { width: 80px; padding-left: 5px; }
.file-row { margin: 6px 0 0 15px; width: 598px; height: 21px; background: #777; border: 1px solid #8a8a8a; display: flex; align-items: center; }
.fc { white-space: nowrap; color: #c8c8c8; }
.fc-name { width: 257px; display: flex; align-items: center; color: #fff; padding-left: 2px; }
.file-ic { margin-right: 5px; }
.fc-date { width: 144px; padding-left: 6px; }
.fc-type { width: 121px; padding-left: 6px; }
.fc-size { width: 73px; text-align: right; }

/* status */
.statusbar { height: 20px; background: #333; display: flex; align-items: center; flex: none; color: #dcdcdc; padding-top: 2px; }
.st-count { margin-left: 14px; width: 44px; }
.st-bar { width: 1px; height: 11px; background: #eee; }
.st-sel { margin-left: 10px; width: 85px; }
.st-size { width: 45px; }
.st-views { margin: -2px 7px 0 auto; display: flex; align-items: center; gap: 3px; }
.st-view { display: flex; align-items: center; justify-content: center; height: 20px; width: 22px; }
.st-view-on { background: #555; border: 1px solid #666; }
.st-ic-a { width: 16px; height: 12px; }
.st-ic-b { width: 15px; height: 12px; }

/* context menus */
.menu { position: absolute; background: #2b2b2b; border: 1px solid #a0a0a0; padding: 4px 2px; box-shadow: 2px 2px 4px rgba(0,0,0,.5); color: #f0f0f0; }
.menu-main { left: 451px; top: 225px; width: 278px; height: 485px; }
.menu-sub { left: 723px; top: 337px; width: 333px; height: 252px; }
.mi { height: 22px; padding: 0 0 2px 32px; display: flex; align-items: center; position: relative; white-space: nowrap; }
.mi-bold { font-weight: 700; }
.mi-hover { background: #414141; }
.mi-ic { position: absolute; left: 8px; top: 3px; width: 16px; height: 16px; }
.mi-arrow { position: absolute; right: 8px; top: 3px; width: 8px; height: 14px; }
.msep { height: 1px; background: #808080; margin: 3px 7px 3px 8px; }
```
